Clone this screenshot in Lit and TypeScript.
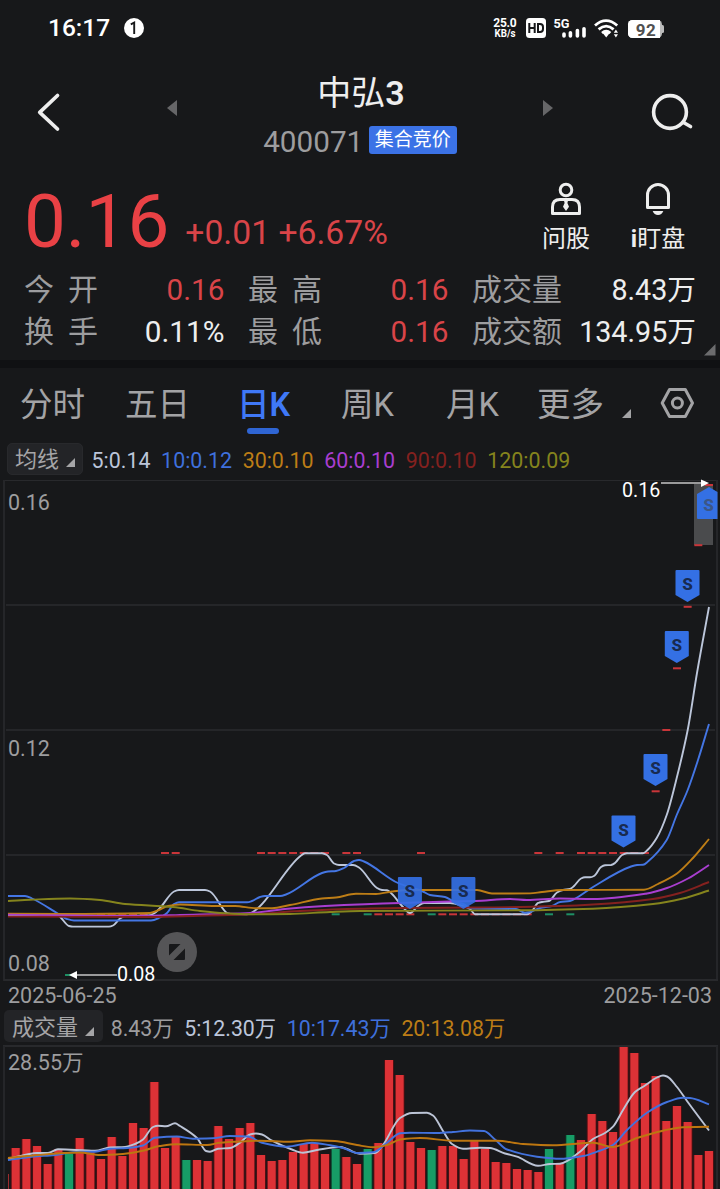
import { LitElement, html, svg, css } from 'lit';
import { customElement } from 'lit/decorators.js';

type Pt = [number, number];

const STEP = 10.666;
const cx = (i: number) => 15.7 + i * STEP;

/** Parses "x,y x,y ..." into points. */
const pts = (s: string): Pt[] => s.trim().split(/\s+/).map((p) => p.split(',').map(Number) as Pt);

/** Monotone cubic path through the points, so flat runs stay flat. */
function curve(s: string): string {
  const p = pts(s);
  const n = p.length;
  const d: number[] = [];
  for (let i = 0; i < n - 1; i++) d.push((p[i + 1][1] - p[i][1]) / (p[i + 1][0] - p[i][0]));
  const m: number[] = [d[0]];
  for (let i = 1; i < n - 1; i++) m.push(d[i - 1] * d[i] <= 0 ? 0 : (2 * d[i - 1] * d[i]) / (d[i - 1] + d[i]));
  m.push(d[n - 2]);
  let out = `M${p[0][0]} ${p[0][1]}`;
  for (let i = 0; i < n - 1; i++) {
    const h = (p[i + 1][0] - p[i][0]) / 3;
    out += `C${(p[i][0] + h).toFixed(1)} ${(p[i][1] + m[i] * h).toFixed(1)} ${(p[i + 1][0] - h).toFixed(1)} ${(p[i + 1][1] - m[i + 1] * h).toFixed(1)} ${p[i + 1][0]} ${p[i + 1][1]}`;
  }
  return out;
}

const PRICE_LINES = [
  { color: '#bcc6da', d: '8,915 57,915 69,926 73,926.6 109,926.6 113,925.5 120,918.5 125,916 148,915.5 154,913.5 160,908 174,891.5 179,890 205,890 210,891.5 228,913.5 232,914.3 247,914.3 252,912.5 301,855.5 305,853.3 322,853.3 327,855 334,863.5 339,865 353,865 359,867.5 377,888 382,890 387,890.3 392,894 402,906 410,913 418,906 424,903 450,903 463,906 470,909 475,914.3 527,914.3 532,911 538,903 542,902 549,901 557,892.5 563,890 570,889 574,886 581,878.5 585,877.3 590,877.3 594,876 601,867 605,865.2 611,865 615,863 622,855 627,853.3 643,853.3 647,850.5 656.7,838 666.7,815 676.7,778 687.7,730 697,673 709,607' },
  { color: '#4476e4', d: '8,896 25,896 32,898.5 57,913 67,919 74,920.5 151,920.5 160,917.5 167,913 174,904 179,902.3 247,902.3 252,901 260,897 265,896 280,896 286,894.5 322,873 328,871.5 336,871 344,868 354,861 359,860 364,861.5 398,883 422,891 430,895 445,897 453,901 463,904 472,908.5 516,909 525,912.7 530,912 540,908 552,906 560,902 570,901 578,897 593,887 631,866.5 637,865 643,864.8 648,861.5 666.7,840 676.7,815 687.7,790 698,760 709,724' },
  { color: '#bd7d16', d: '8,913.8 65,914 150,913 160,909.5 168,906 180,904.5 215,906 235,906 256,908.3 272,908.2 290,905 322,898.5 336,897.5 356,893.8 376,894 392,891.5 410,890 477,890 492,893.5 530,893.4 542,892 562,890 644,889.7 658,884 677,873.5 693,858 709,839' },
  { color: '#a93ed0', d: '8,914.6 75,915.5 140,916 180,915 250,913 285,909 325,906 365,904.2 400,903 450,901.5 475,901 510,899 527,900 560,898.5 593,899 647,893.5 667,888 688,878.5 709,865' },
  { color: '#84211f', d: '8,916.6 150,917 200,915.8 250,914.3 300,911 360,908.8 400,908 480,907.5 560,906 593,904.5 653,899 680,893 709,882' },
  { color: '#85841d', d: '8,901 30,899.7 70,898.5 100,900 125,904 173,907 200,911 225,913.3 250,914.3 290,914 330,912 360,911 520,910.3 593,908.7 653,904 683,898.5 709,890.5' },
];

const VOLUME_LINES = [
  { color: '#bcc4d6', d: '8,1159 27,1154.5 37,1153 48,1153 58,1149.3 95,1150.7 110,1147.5 125,1147 135,1144 143,1139.5 153,1127 158,1125.7 166,1126.3 175,1123.3 180,1126 197,1138 206,1151 210,1151.7 218,1148.7 230,1148 240,1142.7 250,1134.5 256,1133.5 262,1134.5 272,1140.7 292,1149.5 303,1152.7 317,1150 340,1147 347,1149 360,1153.7 375,1153 383,1145 400,1118 412,1113 427,1112.8 433,1115.5 443,1131 452,1144 463,1148.7 480,1147.7 490,1148 505,1153.5 517,1156.7 538,1165.7 550,1164 560,1163.7 580,1151.7 593,1139 605,1133 613,1126.7 623,1110 635,1092 645,1085.5 657,1077.5 663,1075.5 667,1076.5 677,1087 687,1101 709,1130.5' },
  { color: '#4272dd', d: '8,1160 37,1156.3 50,1155.5 80,1151.7 95,1151.7 110,1148.7 127,1148 143,1145.5 155,1137.7 177,1136.5 193,1138.7 213,1138.3 230,1136 248,1136.5 262,1142.7 287,1146.7 312,1142.7 330,1145.3 343,1148 358,1153 373,1152.3 387,1142.7 400,1133.3 410,1132.7 437,1133 453,1132 470,1130.5 484,1131 495,1139.5 507,1149.5 537,1156.7 560,1158.8 583,1156 597,1151.7 613,1145 627,1130 647,1112.7 667,1102 683,1097.7 690,1098 709,1104.3' },
  { color: '#bd7610', d: '8,1158 27,1156 80,1152.5 100,1155 123,1154 143,1150.7 160,1146 177,1144.3 207,1145 220,1142.7 240,1141.5 260,1140.7 290,1141.7 310,1140.3 335,1141 357,1145 373,1147.2 387,1145 400,1139.5 420,1138 453,1140.7 497,1140.7 523,1144 553,1145.2 593,1142.7 613,1147 637,1138 663,1130.7 683,1127.2 709,1126.8' },
];

const BAR_TOPS = [
  1148, 1139, 1146, 1164, 1149, 1154, 1138, 1152.5, 1159, 1137, 1156, 1123, 1128, 1082, 1148, 1137, 1160, 1160, 1161,
  1126, 1139, 1128, 1123, 1155, 1161, 1160, 1152, 1144, 1143, 1154, 1149, 1157, 1164, 1149, 1143, 1060, 1075, 1142,
  1148, 1150, 1146, 1146, 1159, 1141, 1149, 1162, 1163, 1169, 1170, 1172, 1149, 1164, 1135, 1140, 1114, 1121, 1132,
  1047, 1053, 1083, 1076, 1121, 1106, 1122, 1155, 1151,
];
const FALLING = new Set([5, 16, 30, 33, 39, 50, 52]);

const AT_010 = [14, 15, 23, 24, 25, 26, 27, 28, 29, 31, 32, 38, 49, 51, 53, 54, 55, 56, 57, 58, 59];
const AT_009 = [0, 1, 2, 3, 4, 8, 9, 10, 11, 12, 34, 35, 36, 37, 40, 41, 42, 43, 44, 45, 46, 47, 48];
const AT_009_DOWN = [30, 33, 39, 50, 52];
const RISE: Pt[] = [[60, 791.3], [61, 730], [62, 668.3], [63, 606.8], [64, 545.2], [65, 485]];
const SELL: Pt[] = [[409.9, 877], [463.4, 877], [623.5, 815.5], [655.5, 754], [676.8, 631], [687.5, 570]];

@customElement('stock-status-bar')
class StockStatusBar extends LitElement {
  static styles = css`
    :host { display: flex; height: 56px; align-items: center; color: #fff; font-family: Roboto, sans-serif; }
    .time { margin-left: 48px; width: 76px; font-size: 24.5px; font-weight: 500; line-height: 28px; }
    .icons { margin-left: auto; display: block; }
    .note { display: block; }
    text { font-family: Roboto, sans-serif; font-weight: 700; }
    .mid { text-anchor: middle; }
  `;
  render() {
    return html`
      <span class="time">16:17</span>
      <svg class="note" width="20" height="20">
        <circle cx="10" cy="10" r="10" fill="#fff" />
        <path d="M6.800 6.300 10.200 4.600V16" fill="none" stroke="#17181a" stroke-width="1.9" />
      </svg>
      <svg class="icons" width="230" height="56" viewBox="490 0 230 56">
        <text class="mid" x="505" y="27" font-size="12" fill="#fff" textLength="23.5">25.0</text>
        <text class="mid" x="505" y="37" font-size="10" fill="#fff" textLength="21" lengthAdjust="spacingAndGlyphs">KB/s</text>
        <rect x="526" y="18" width="20" height="20" rx="3.5" fill="#fff" />
        <path d="M529.3 23v10M534.7 23v10M529.3 28h5.4M538 24v8h2q3 0 3-3v-2q0-3-3-3z" fill="none" stroke="#17181a" stroke-width="2" />
        <text x="553.5" y="28" font-size="13.5" fill="#fff" textLength="16" lengthAdjust="spacingAndGlyphs">5G</text>
        <path d="M564 34V36M570.400 32.700V36M577.400 30.500V36M584 28.700V36" stroke="#fff" stroke-width="3.600" stroke-linecap="round" />
        <g fill="none" stroke="#fff" stroke-width="2.8">
          <path d="M595 25.5q11-9.8 22.2 0" />
          <path d="M598.6 29.4q7.6-6.6 15 0" />
          <path d="M602 33q4.2-3.4 8.4 0" />
        </g>
        <path d="M602.7 33q3.5-2.5 7 0l-3.5 4.6z" fill="#fff" />
        <path d="M613.8 32.7l2.1-3.2 2.1 3.2zM613.8 34.2l2.1 3.2 2.1-3.2z" fill="#fff" />
        <rect x="660" y="25" width="4" height="8" rx="1.5" fill="#bbb" />
        <rect x="628" y="20" width="34" height="18" rx="4.5" fill="#bbb" />
        <path d="M632.500 20H660V38H632.500A4.500 4.500 0 0 1 628 33.500V24.500A4.500 4.500 0 0 1 632.500 20Z" fill="#fff" />
        <text class="mid" x="645.7" y="35.5" font-size="17" fill="#505050" textLength="20">92</text>
      </svg>
    `;
  }
}

@customElement('stock-header')
class StockHeader extends LitElement {
  static styles = css`
    :host { display: grid; grid-template-columns: 160px 1fr 160px; height: 116px; font-family: Roboto, 'Noto Sans CJK SC', sans-serif; }
    svg { display: block; }
    .main { display: flex; flex-direction: column; align-items: center; }
    .name { margin-top: 14px; height: 46px; line-height: 46px; font-size: 34px; font-weight: 400; color: #eee; margin-left: 2px; }
    .name b { font-weight: 600; }
    .code { display: flex; align-items: center; height: 48px; gap: 5.500px; font-size: 29.700px; color: #9d9d9f; }
    .code span { margin-top: 2px; }
    .tag { width: 88px; height: 28px; line-height: 28px; border-radius: 3px; background: #3b72e6; color: #fff; font-size: 19px; text-align: center; }
  `;
  render() {
    return html`
      <svg width="160" height="116" viewBox="0 56 160 116">
        <path d="M57.500 95.500 39.700 112.300 57.500 129" fill="none" stroke="#eee" stroke-width="3.700" stroke-linecap="round" stroke-linejoin="round" />
      </svg>
      <div class="main">
        <div class="name">中弘<b>3</b></div>
        <div class="code"><span>400071</span><div class="tag">集合竞价</div></div>
      </div>
      <svg width="160" height="116" viewBox="560 56 160 116" fill="none" stroke="#eee" stroke-width="3.600">
        <circle cx="670" cy="112" r="16.400" />
        <path d="M683.500 122.500 690.500 126.500" stroke-linecap="round" />
      </svg>
    `;
  }
}

@customElement('stock-quote')
class StockQuote extends LitElement {
  static styles = css`
    :host { display: flex; flex-direction: column; height: 188px; font-family: Roboto, 'Noto Sans CJK SC', sans-serif; }
    .top { display: flex; height: 97px; }
    .prices { display: flex; align-items: baseline; flex: 1; padding-left: 24px; color: #e94145; white-space: pre; }
    .last { font-size: 74.500px; line-height: 100px; }
    .change { font-size: 33.700px; margin-left: 16px; color: #d94448; position: relative; top: -3.500px; }
    .action { display: flex; flex-direction: column; align-items: center; width: 92px; color: #eee; font-size: 24px; line-height: 36px; }
    .action svg { display: block; margin-top: 10px; margin-bottom: 3px; }
    .actions { display: flex; margin-right: 16px; }
    .stats { display: grid; grid-template-columns: 90px 110.500px 113.500px 110.500px 113px 1fr; grid-auto-rows: 42px; padding: 0 24px; font-size: 30px; line-height: 42px; }
    .k { color: #9d9d9f; white-space: nowrap; }
    .gap { letter-spacing: 14px; }
    .inset { padding-left: 23.500px; }
    .v { text-align: right; color: #eee; white-space: nowrap; font-size: 29.700px; }
    .up { color: #d94448; }
    .total { font-size: 28.700px; }
    .fold { align-self: flex-end; margin: -9px 4px 0 0; display: block; }
  `;
  render() {
    return html`
      <div class="top">
        <div class="prices"><span class="last">0.16</span><span class="change">+0.01 +6.67%</span></div>
        <div class="actions">
          <div class="action">
            <svg width="34" height="36" viewBox="549 182 34 36">
              <g fill="none" stroke="#eee" stroke-width="3">
                <circle cx="566" cy="190" r="5.800" />
                <path d="M552.500 213.500V207Q552.500 199.500 560 199.500H572Q579.500 199.500 579.500 207V213.500Z" stroke-linejoin="round" />
              </g>
              <path d="M563.800 200h4.400l-.8 3 1.600 3.800-3 4.200-3-4.200 1.600-3.800z" fill="#eee" />
            </svg>
            <span>问股</span>
          </div>
          <div class="action">
            <svg width="34" height="36" viewBox="641 182 34 36">
              <path d="M647.500 207.500V195a10.500 10.500 0 0 1 21 0v12.500z" fill="none" stroke="#eee" stroke-width="3" stroke-linejoin="round" />
              <path d="M652.700 211h10.600q-1.500 4-5.300 4t-5.300-4z" fill="#eee" />
            </svg>
            <span><b>i</b>盯盘</span>
          </div>
        </div>
      </div>
      <div class="stats">
        <span class="k gap">今开</span><span class="v up">0.16</span>
        <span class="k gap inset">最高</span><span class="v up">0.16</span>
        <span class="k inset">成交量</span><span class="v total">8.43万</span>
        <span class="k gap">换手</span><span class="v">0.11%</span>
        <span class="k gap inset">最低</span><span class="v up">0.16</span>
        <span class="k inset">成交额</span><span class="v total">134.95万</span>
      </div>
      <svg class="fold" width="12" height="12"><path d="M0 11.500 11.500 0V11.500Z" fill="#6c6c6e" /></svg>
    `;
  }
}

@customElement('stock-tabs')
class StockTabs extends LitElement {
  static styles = css`
    :host { display: block; height: 73px; color: #a3a3a5; font-family: Roboto, 'Noto Sans CJK SC', sans-serif; }
    .row { display: grid; grid-template-columns: 105px 114px 102px 105px 91px 82px 1fr; padding-left: 20px; font-size: 32.500px; line-height: 74px; height: 73px; }
    .tab { white-space: nowrap; }
    .active { display: flex; flex-direction: column; width: 50px; align-items: center; color: #3f78f6; font-weight: 500; }
    .active b { line-height: 66px; margin-top: 4px; margin-left: -1px; height: 56px; font-weight: 600; white-space: nowrap; }
    .cjk { font-weight: 500; }
    .bar { width: 32px; height: 6px; border-radius: 3px; background: #2f65d4; margin-left: -2px; }
    svg { display: block; }
    .more { font-size: 33.500px; }
  `;
  render() {
    return html`
      <div class="row">
        <span class="tab">分时</span>
        <span class="tab">五日</span>
        <span class="tab active"><b><span class="cjk">日</span>K</b><span class="bar"></span></span>
        <span class="tab">周K</span>
        <span class="tab">月K</span>
        <span class="tab more">更多</span>
        <svg width="101" height="72" viewBox="619 368 101 72">
          <path d="M622 418 631 409V418Z" fill="#a3a3a5" />
          <g fill="none" stroke="#a3a3a5" stroke-width="3">
            <path d="M669.500 389.500H685.300L692.500 403 685.300 416.500H669.500L662.200 403Z" stroke-linejoin="round" />
            <circle cx="677.400" cy="403" r="5" />
          </g>
        </svg>
      </div>
    `;
  }
}

@customElement('stock-chart')
class StockChart extends LitElement {
  static styles = css`
    :host { display: block; font-family: Roboto, 'Noto Sans CJK SC', sans-serif; }
    .legend { display: flex; align-items: center; white-space: pre; }
    .ma { height: 39px; padding-left: 7px; gap: 10.600px; font-size: 21.400px; }
    .vol { height: 37px; padding-left: 4px; gap: 10.700px; font-size: 21.300px; }
    .vol > span { margin-top: -2px; }
    .pick { display: flex; align-items: center; height: 32px; box-sizing: border-box; background: #232427; border-radius: 5px; color: #a5a5a7; font-size: 22px; line-height: 28px; }
    .ma .pick { width: 76px; padding: 2px 0 0 7px; margin-right: -2px; border: 1px solid #28292c; margin-top: -4px; }
    .vol .pick { width: 99px; padding: 4px 0 0 8px; margin-right: -3px; margin-top: -3px; }
    .pick svg { display: block; margin: 6px 0 0 7px; }
    .c0 { color: #9d9d9f; }
    .c5 { color: #bcc6da; }
    .c10 { color: #3f70dc; }
    .c30 { color: #bd7d16; }
    .c60 { color: #a93ed0; }
    .c90 { color: #84211f; }
    .c120 { color: #85841d; }
    .plot { display: block; overflow: visible; }
    .dates { display: flex; justify-content: space-between; height: 28px; padding: 0 8px; line-height: 30px; font-size: 21.500px; color: #9d9d9f; }
    text { font-family: Roboto, 'Noto Sans CJK SC', sans-serif; font-size: 21.500px; }
    .axis { fill: #9d9d9f; }
    .mark { fill: #fff; font-size: 19.700px; }
    .sell { fill: #182b50; font-size: 17px; font-weight: 800; text-anchor: middle; }
    .faint { fill: #3c5687; }
  `;

  private dash(i: number, y: number, color: string) {
    return svg`<rect x=${cx(i) - 4} y=${y - 1} width="8" height="2" fill=${color} />`;
  }

  private line(l: { color: string; d: string }) {
    return svg`<path d=${curve(l.d)} fill="none" stroke=${l.color} stroke-width="1.9" stroke-linejoin="round" />`;
  }

  private flag(x: number, y: number, opacity: number) {
    return svg`<path d="M${x - 12} ${y + 1}q0-1 1-1h22q1 0 1 1v24l-12 7-12-7z" fill="#3470e4" fill-opacity=${opacity} />
      <text class="sell" x=${x} y=${y + 20}>S</text>`;
  }

  render() {
    const tri = html`<svg width="9" height="9"><path d="M0 9 9 0V9Z" fill="#a5a5a7" /></svg>`;
    return html`
      <div class="legend ma">
        <div class="pick">均线${tri}</div>
        <span class="c5">5:0.14</span><span class="c10">10:0.12</span><span class="c30">30:0.10</span>
        <span class="c60">60:0.10</span><span class="c90">90:0.10</span><span class="c120">120:0.09</span>
      </div>
      <svg class="plot" width="720" height="501" viewBox="0 480 720 501">
        <path d="M4 480.500H717.500" stroke="#28292c" stroke-width="1" />
        <path d="M4 480V981M717 480V981" stroke="#252629" stroke-width="2" />
        <path d="M4 980H718" stroke="#28292c" stroke-width="2" />
        <path d="M6 605H715M6 730H715M6 855H715" stroke="#252629" stroke-width="2" />
        ${AT_010.map((i) => this.dash(i, 853, '#c93539'))}
        ${AT_009.map((i) => this.dash(i, 914.3, '#c93539'))}
        ${AT_009_DOWN.map((i) => this.dash(i, 914.3, '#1e8f64'))}
        <rect x="694" y="484" width="19" height="61" fill="#4a4b4d" />
        ${RISE.map(([i, y]) => this.dash(i, y, '#c93539'))}
        ${this.dash(5, 975, '#1e8f64')}
        ${SELL.slice(2).map(([x, y]) => this.flag(x, y, 1))}
        <path d="M697 494 709 487 717.500 492V519H698Q697 519 697 518Z" fill="#3470e4" />
        <text class="sell faint" x="708.500" y="511">S</text>
        ${PRICE_LINES.map((l) => this.line(l))}
        ${SELL.slice(0, 2).map(([x, y]) => this.flag(x, y, 0.92))}
        <path d="M661 483H702" stroke="#9a9a9b" stroke-width="2" />
        <path d="M701 479.500 709 483 701 487Z" fill="#fff" />
        <path d="M76 975H117" stroke="#9a9a9b" stroke-width="2" />
        <path d="M77 971 69 975 77 979Z" fill="#fff" />
        <text class="mark" x="622" y="497">0.16</text>
        <text class="mark" x="117" y="981">0.08</text>
        <text class="axis" x="8" y="510">0.16</text>
        <text class="axis" x="8" y="756">0.12</text>
        <text class="axis" x="8" y="971">0.08</text>
        <circle cx="177" cy="952" r="20" fill="#555557" />
        <path d="M169 945q0-1 1-1h10.500l-11.500 11.500zM185 959q0 1-1 1h-10.500l11.500-11.500z" fill="#17181a" />
      </svg>
      <div class="dates"><span>2025-06-25</span><span>2025-12-03</span></div>
      <div class="legend vol">
        <div class="pick">成交量${tri}</div>
        <span class="c0">8.43万</span><span class="c5">5:12.30万</span><span class="c10">10:17.43万</span><span class="c30">20:13.08万</span>
      </div>
      <svg class="plot" width="720" height="143" viewBox="0 1046 720 143">
        <path d="M3 1046H718" stroke="#28292c" stroke-width="2" />
        <path d="M4 1046V1189M717 1046V1189" stroke="#252629" stroke-width="2" />
        <rect x="8" y="1174" width="1" height="15" fill="#9c2c2f" />
        ${BAR_TOPS.map((y, i) => {
          const up = !FALLING.has(i);
          return svg`<rect x=${cx(i) - 5} y=${y} width="10" height=${1189 - y} fill=${up ? '#4c1013' : '#0d3324'} />
            <rect x=${cx(i) - 4} y=${y} width="8" height=${1189 - y} fill=${up ? '#dd3236' : '#179c66'} />`;
        })}
        ${VOLUME_LINES.map((l) => this.line(l))}
        <text class="axis" x="8" y="1070">28.55万</text>
      </svg>
    `;
  }
}

@customElement('app-root')
class AppRoot extends LitElement {
  static styles = css`
    :host { display: block; width: 720px; height: 1189px; overflow: hidden; background: #17181a; }
    .header { position: relative; }
    .nav { position: absolute; top: 44px; display: block; }
    .prev { left: 167px; }
    .next { left: 543px; }
    .band { height: 8px; background: #101113; }
  `;
  render() {
    return html`
      <stock-status-bar></stock-status-bar>
      <div class="header">
        <stock-header></stock-header>
        <svg class="nav prev" width="10" height="16"><path d="M10 0V16L0 8Z" fill="#666668" /></svg>
        <svg class="nav next" width="10" height="16"><path d="M0 0V16L10 8Z" fill="#666668" /></svg>
      </div>
      <stock-quote></stock-quote>
      <div class="band"></div>
      <stock-tabs></stock-tabs>
      <stock-chart></stock-chart>
    `;
  }
}
